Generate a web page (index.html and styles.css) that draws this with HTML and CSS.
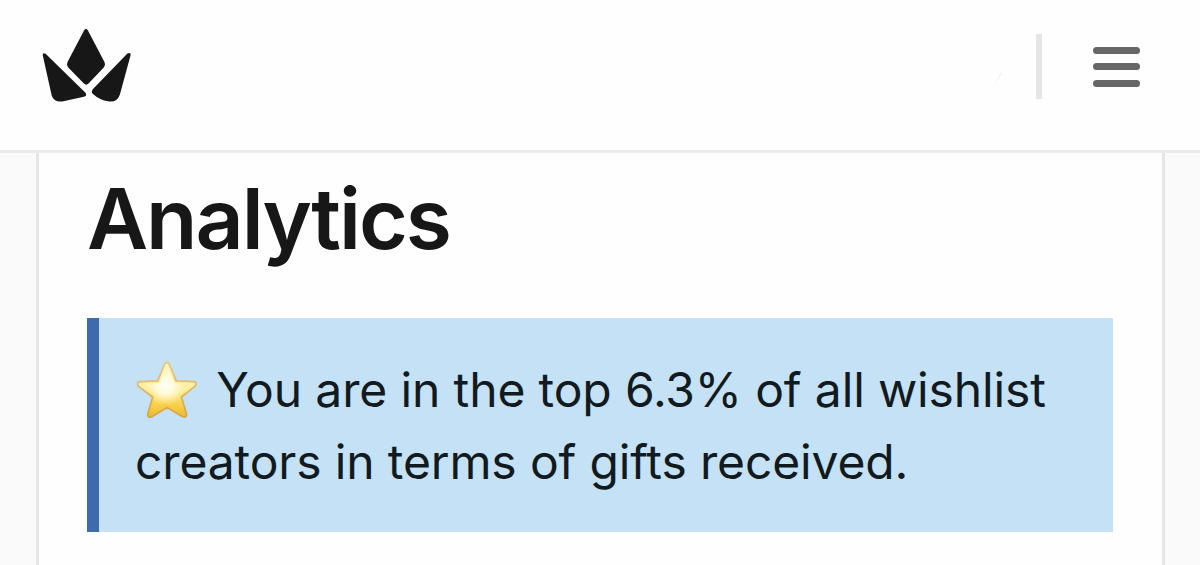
FILE: index.html
```
<!DOCTYPE html>
<html lang="en">
<head>
    <meta charset="UTF-8">
    <meta name="viewport" content="width=device-width, initial-scale=1.0">
    <title>Analytics</title>
    <link rel="stylesheet" href="styles.css">
</head>
<body>
    <header class="topbar">
        <a class="logo" href="#" aria-label="Home">
            <svg width="90" height="76" viewBox="0 0 90 76">
                <path d="M43.2 2.2Q45 -0.8 46.8 2.2L63.200 33.400Q65 37 62.300 40L47.500 55.600Q45.200 57.800 42.900 55.600L27.700 40Q25 37 26.800 33.400Z"/>
                <path d="M1.800 27.400Q1.200 24 4.600 25.800L44.200 64.400Q46.800 67.600 42.800 68.800L22.5 73.300Q13 75 10.700 67.500Z"/>
                <path d="M86.400 25.500Q90.300 23.800 89.500 27.400L78.900 66.500Q76 75 67 73.300Q59 72.300 51.600 65.800Q50 63.400 52 61Z"/>
            </svg>
        </a>
        <div class="actions">
            <svg class="mark" width="8" height="12" viewBox="0 0 8 12">
                <path d="M6 1Q5 6 1 9"/>
            </svg>
            <span class="divider"></span>
            <button class="menu" aria-label="Menu">
                <span></span>
                <span></span>
                <span></span>
            </button>
        </div>
    </header>

    <main class="card">
        <h1>Analytics</h1>
        <p class="notice">
            <svg class="star" width="64" height="58" viewBox="0 0 64 58">
                <defs>
                    <linearGradient id="gold" x1="0" y1="0" x2="0" y2="1">
                        <stop offset="0" stop-color="#fdf3c4"/>
                        <stop offset="0.5" stop-color="#fdee9c"/>
                        <stop offset="0.75" stop-color="#f9d350"/>
                        <stop offset="1" stop-color="#efb830"/>
                    </linearGradient>
                    <radialGradient id="shine" cx="0.47" cy="0.42" r="0.42">
                        <stop offset="0" stop-color="#fffff4"/>
                        <stop offset="0.45" stop-color="#fffde4" stop-opacity="0.85"/>
                        <stop offset="1" stop-color="#fff6b8" stop-opacity="0"/>
                    </radialGradient>
                    <linearGradient id="edge" x1="0" y1="0" x2="0" y2="1">
                        <stop offset="0" stop-color="#e2c987"/>
                        <stop offset="1" stop-color="#d6a546"/>
                    </linearGradient>
                </defs>
                <path d="M29.300 3.500Q32 -0.500 34.300 3.500L41.200 19.800L58.300 20.600Q63.500 21.500 59.500 25.600L46.400 36L51.400 52.500Q52 57.500 47.300 55.500L32 46.500L16.800 55.700Q12 57.500 12.900 52.500L17.600 36L3.800 25.600Q0.500 21.500 5.500 20.600L22.800 19.800Z" fill="url(#gold)" stroke="url(#edge)" stroke-width="1.800" stroke-linejoin="round"/>
                <path d="M32 4L39.500 22L57 23L44 35L48 52L32 43L16 52L20 35L7 23L24.500 22Z" fill="url(#shine)"/>
            </svg>
            You are in the top 6.3% of all wishlist creators in terms of gifts received.
        </p>
    </main>
</body>
</html>
```

FILE: styles.css
```
* {
    box-sizing: border-box;
}
body {
    margin: 0;
    height: 565px;
    overflow: hidden;
    display: flex;
    flex-direction: column;
    background: #fafafa;
    color: #171717;
    font-family: Inter, "Liberation Sans", sans-serif;
}
.topbar {
    flex: none;
    height: 153px;
    padding: 28px 60px 0 41px;
    display: flex;
    justify-content: space-between;
    align-items: flex-start;
    background: #fefefe;
    border-bottom: 3px solid #ececec;
}
.logo svg {
    display: block;
    fill: #171717;
}
.actions {
    display: flex;
    align-items: center;
    margin-top: 6px;
}
.mark {
    margin: 22px 33px 0 0;
    fill: none;
    stroke: #f0f0f0;
}
.divider {
    width: 6px;
    height: 65px;
    background: #e5e5e5;
}
.menu {
    display: flex;
    flex-direction: column;
    gap: 9.5px;
    width: 47px;
    margin-left: 51px;
    padding: 0;
    border: none;
    background: none;
    cursor: pointer;
}
.menu span {
    height: 7px;
    border-radius: 4px;
    background: #666;
}
.card {
    flex: 1;
    margin: 0 35px 0 36px;
    padding: 15px 49px 0 48px;
    background: #fefefe;
    border: solid #e6e6e6;
    border-width: 0 3px;
}
h1 {
    margin: 0 0 48px;
    font-size: 84px;
    font-weight: 600;
    line-height: 102px;
    letter-spacing: -2px;
}
.notice {
    margin: 0;
    height: 214px;
    padding: 36px 36px 0;
    border-left: 12px solid #3e6bab;
    background: #c5e1f5;
    color: #111a20;
    font-size: 48px;
    line-height: 72px;
    letter-spacing: -0.14px;
}
.star {
    vertical-align: -12px;
    margin-right: 4px;
}
```
